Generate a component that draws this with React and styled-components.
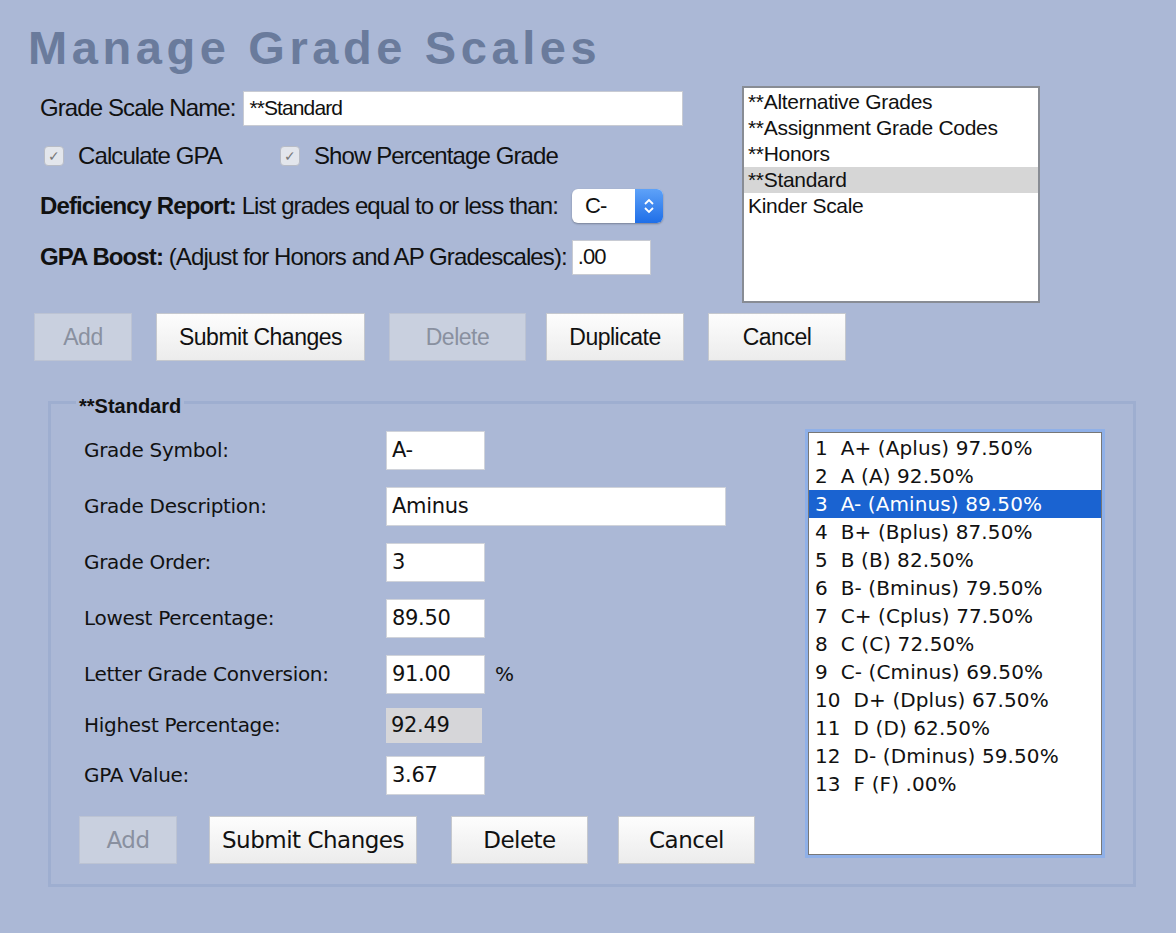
import React from "react";
import styled, { createGlobalStyle } from "styled-components";

const G = createGlobalStyle`
  html,body{margin:0;padding:0;background:#abb8d6;}
  body{font-family:"Liberation Sans",Arial,sans-serif;color:#111;}
`;
const Page = styled.div`width:1176px;height:933px;padding:20px 0 0 28px;box-sizing:border-box;`;
const Title = styled.h1`margin:0;font:bold 47px/56px "Liberation Sans",Arial,sans-serif;letter-spacing:4.6px;color:#6a7b9c;`;
const Top = styled.div`display:flex;margin-top:10px;`;
const TopLeft = styled.div`width:700px;padding-left:12px;box-sizing:border-box;`;
const Row = styled.div`display:flex;align-items:center;height:${p=>p.h}px;font-size:24px;letter-spacing:-0.9px;white-space:nowrap;`;
const TextIn = styled.div`background:#fff;border:1px solid #c8cbd3;height:35px;box-sizing:border-box;display:flex;align-items:center;padding-left:5px;font-size:${p=>p.fs||22}px;width:${p=>p.w}px;margin-left:${p=>p.ml||0}px;flex-shrink:0;`;
const Check = styled.span`width:20px;height:20px;border-radius:4px;background:#e3e6ec;border:1px solid #b8bcc6;box-sizing:border-box;display:inline-flex;align-items:center;justify-content:center;color:#777;font-size:14px;margin:0 14px 0 ${p=>p.ml||4}px;`;
const Select = styled.div`margin-left:14px;width:91px;height:34px;border-radius:6px;background:#fff;box-shadow:0 1px 2px rgba(0,0,0,.3);display:flex;align-items:center;overflow:hidden;flex-shrink:0;`;
const SelText = styled.span`flex:1;padding-left:13px;font-size:22px;`;
const SelBtn = styled.span`width:28px;height:100%;background:linear-gradient(#5ea2f8,#1f6fe8);display:flex;align-items:center;justify-content:center;`;
const ListBox = styled.div`width:298px;height:217px;margin-left:14px;background:#fff;border:2px solid #888c94;box-sizing:border-box;padding-top:1px;font-size:21px;letter-spacing:-0.3px;`;
const LItem = styled.div`height:26px;line-height:26px;padding-left:4px;background:${p=>p.sel?"#d6d6d6":"transparent"};`;
const Btns = styled.div`display:flex;gap:${p=>p.gap||22}px;margin-top:${p=>p.mt||0}px;margin-left:${p=>p.ml||0}px;`;
const Btn = styled.div`width:${p=>p.w}px;height:48px;box-sizing:border-box;display:flex;align-items:center;justify-content:center;font-size:23px;letter-spacing:-0.5px;background:${p=>p.dis?"#c9d0df":"linear-gradient(#fdfdfd,#ececec)"};color:${p=>p.dis?"#8990a0":"#111"};border:1px solid ${p=>p.dis?"#bcc3d3":"#c5c8ce"};`;
const Fieldset = styled.fieldset`margin:30px 0 0 20px;width:1088px;height:496px;box-sizing:border-box;border:3px solid #9eaed0;padding:0 0 0 33px;display:flex;`;
const Legend = styled.legend`font-weight:bold;font-size:20px;padding:0 3px;margin-left:-8px;position:relative;top:4px;`;
const FormCol = styled.div`width:700px;font-family:"DejaVu Sans",sans-serif;padding-top:8px;`;
const FRow = styled.div`display:flex;align-items:center;height:${p=>p.h||56}px;font-size:20px;letter-spacing:-0.3px;`;
const FLabel = styled.span`width:302px;`;
const FIn = styled.div`width:${p=>p.w||99}px;box-sizing:border-box;background:${p=>p.ro?"#d6d6d9":"#fff"};border:${p=>p.ro?"none":"1px solid #d0d3da"};display:flex;align-items:center;padding-left:5px;font-size:21px;margin-right:10px;height:${p=>p.ro?35:39}px;`;
const GradeList = styled.div`margin:18px 0 0 24px;width:294px;height:423px;box-sizing:border-box;background:#fff;border:1px solid #777;box-shadow:0 0 0 3px #8fb0e8;padding-top:1px;font-family:"DejaVu Sans",sans-serif;font-size:20px;letter-spacing:0.1px;`;
const GItem = styled.div`height:28px;line-height:28px;padding-left:6px;white-space:pre;background:${p=>p.sel?"#1a63d1":"transparent"};color:${p=>p.sel?"#fff":"#111"};`;

const grades=["1  A+ (Aplus) 97.50%","2  A (A) 92.50%","3  A- (Aminus) 89.50%","4  B+ (Bplus) 87.50%","5  B (B) 82.50%","6  B- (Bminus) 79.50%","7  C+ (Cplus) 77.50%","8  C (C) 72.50%","9  C- (Cminus) 69.50%","10  D+ (Dplus) 67.50%","11  D (D) 62.50%","12  D- (Dminus) 59.50%","13  F (F) .00%"];

export default function App(){
  return <Page><G/>
    <Title>Manage Grade Scales</Title>
    <Top>
      <TopLeft>
        <Row h={44}>Grade Scale Name:<TextIn w={440} ml={8} fs={21}>**Standard</TextIn></Row>
        <Row h={52}><Check>✓</Check>Calculate GPA<Check ml={58}>✓</Check>Show Percentage Grade</Row>
        <Row h={48}><b>Deficiency Report:</b>&nbsp;List grades equal to or less than:
          <Select><SelText>C-</SelText><SelBtn><svg width="12" height="20" viewBox="0 0 12 20"><path d="M2 8l4-4 4 4M2 12l4 4 4-4" stroke="#fff" strokeWidth="1.8" fill="none"/></svg></SelBtn></Select></Row>
        <Row h={54}><b>GPA Boost:</b>&nbsp;(Adjust for Honors and AP Gradescales):<TextIn w={79} ml={5}>.00</TextIn></Row>
      </TopLeft>
      <ListBox>
        {["**Alternative Grades","**Assignment Grade Codes","**Honors","**Standard","Kinder Scale"].map(t=><LItem key={t} sel={t==="**Standard"}>{t}</LItem>)}
      </ListBox>
    </Top>
    <Btns ml={6} mt={10} gap={24}>
      <Btn w={98} dis>Add</Btn><Btn w={209}>Submit Changes</Btn><Btn w={137} dis>Delete</Btn><Btn w={138} style={{marginLeft:-4}}>Duplicate</Btn><Btn w={138}>Cancel</Btn>
    </Btns>
    <Fieldset>
      <Legend>**Standard</Legend>
      <FormCol>
        <FRow><FLabel>Grade Symbol:</FLabel><FIn>A-</FIn></FRow>
        <FRow><FLabel>Grade Description:</FLabel><FIn w={340}>Aminus</FIn></FRow>
        <FRow><FLabel>Grade Order:</FLabel><FIn>3</FIn></FRow>
        <FRow><FLabel>Lowest Percentage:</FLabel><FIn>89.50</FIn></FRow>
        <FRow><FLabel>Letter Grade Conversion:</FLabel><FIn>91.00</FIn>%</FRow>
        <FRow h={46}><FLabel>Highest Percentage:</FLabel><FIn ro w={96}>92.49</FIn></FRow>
        <FRow h={54}><FLabel>GPA Value:</FLabel><FIn>3.67</FIn></FRow>
        <Btns mt={14} ml={-5} gap={32}>
          <Btn w={98} dis>Add</Btn><Btn w={208}>Submit Changes</Btn><Btn w={137} style={{marginLeft:2}}>Delete</Btn><Btn w={137} style={{marginLeft:-2}}>Cancel</Btn>
        </Btns>
      </FormCol>
      <GradeList>{grades.map(g=><GItem key={g} sel={g.startsWith("3 ")}>{g}</GItem>)}</GradeList>
    </Fieldset>
  </Page>;
}
